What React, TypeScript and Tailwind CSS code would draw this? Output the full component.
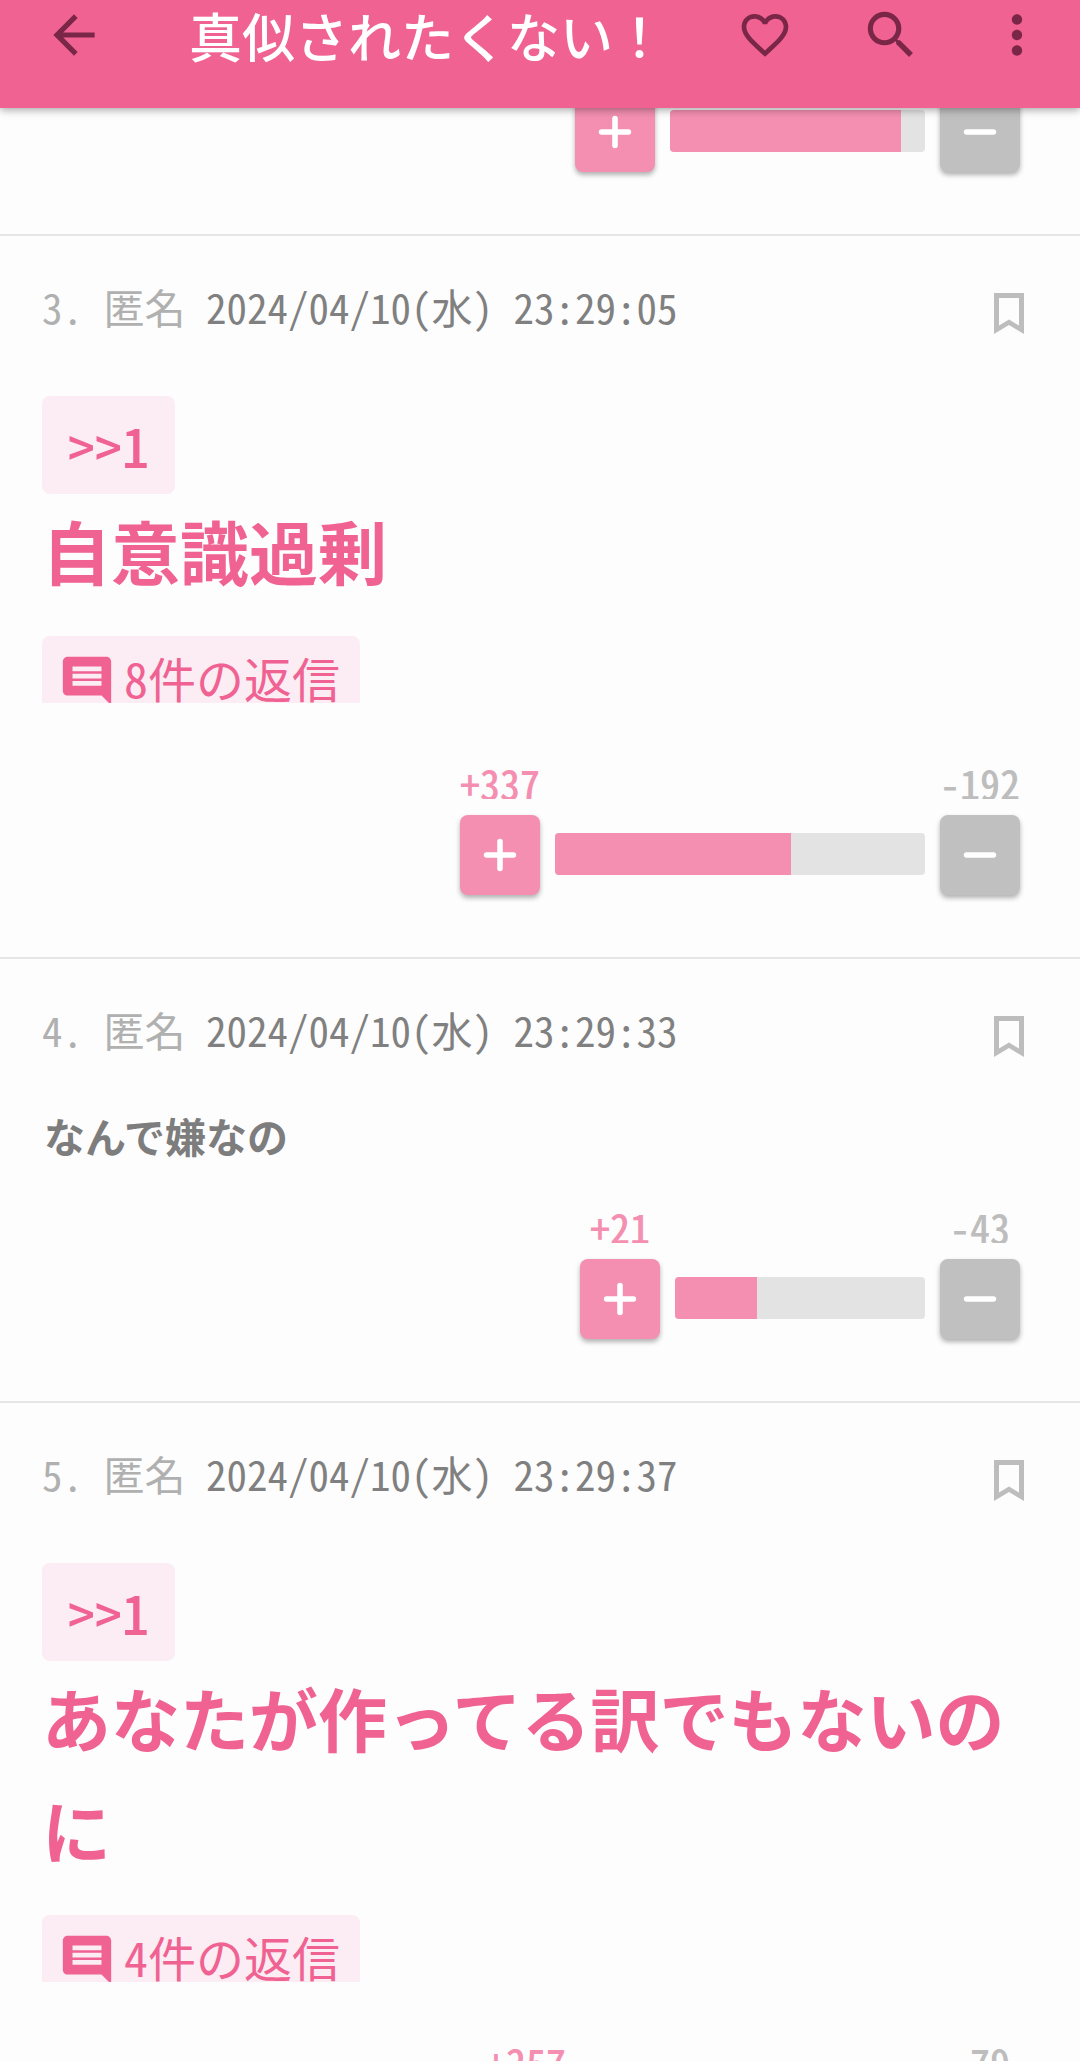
import React from "react";
import { Minus, Plus } from "lucide-react";
import {
  MdArrowBack,
  MdComment,
  MdFavoriteBorder,
  MdMoreVert,
  MdSearch,
} from "react-icons/md";

type Votes = { plus: number; minus: number; barWidth: number };

type Post = {
  id: number;
  time: string;
  body: string;
  quote?: string;
  popular?: boolean;
  replies?: number;
  votes: Votes;
};

const posts: Post[] = [
  {
    id: 3,
    time: "2024/04/10(水) 23:29:05",
    quote: ">>1",
    body: "自意識過剰",
    popular: true,
    replies: 8,
    votes: { plus: 337, minus: 192, barWidth: 370 },
  },
  {
    id: 4,
    time: "2024/04/10(水) 23:29:33",
    body: "なんで嫌なの",
    votes: { plus: 21, minus: 43, barWidth: 250 },
  },
  {
    id: 5,
    time: "2024/04/10(水) 23:29:37",
    quote: ">>1",
    body: "あなたが作ってる訳でもないのに",
    popular: true,
    replies: 4,
    votes: { plus: 257, minus: 79, barWidth: 344 },
  },
];

const BookmarkIcon = () => (
  <svg width="30" height="41" viewBox="0 0 30 41" fill="#bdbdbd">
    <path
      fillRule="evenodd"
      d="M0 0H30V41L15 32L0 41ZM5 5V32.5L15 26.5L25 32.5V5Z"
    />
  </svg>
);

const VoteBar = ({ plus, minus, barWidth }: Votes) => {
  const ratio = (plus / (plus + minus)) * 100;

  return (
    <div className="flex items-end justify-end gap-[15px] pr-[60px] shrink-0">
      <div className="w-20 flex flex-col items-center gap-4">
        <span className="h-[46px] overflow-hidden whitespace-nowrap text-[40px] leading-[60px] font-medium text-[#f48fb1]">
          +{plus}
        </span>
        <button
          aria-label="プラス"
          className="size-20 rounded-lg bg-[#f48fb1] text-white shadow-[0_3px_5px_rgba(0,0,0,0.3)] flex items-center justify-center"
        >
          <Plus size={46} strokeWidth={2.9} />
        </button>
      </div>
      <div
        className="h-[42px] mb-5 rounded-sm bg-[#e3e3e3] overflow-hidden"
        style={{ width: barWidth }}
      >
        <div className="h-full bg-[#f48fb1]" style={{ width: `${ratio}%` }} />
      </div>
      <div className="w-20 flex flex-col items-center gap-4">
        <span className="h-[46px] overflow-hidden whitespace-nowrap text-[40px] leading-[60px] font-medium text-[#bdbdbd]">
          -{minus}
        </span>
        <button
          aria-label="マイナス"
          className="size-20 rounded-lg bg-[#c0c0c0] text-white shadow-[0_3px_5px_rgba(0,0,0,0.3)] flex items-center justify-center"
        >
          <Minus size={46} strokeWidth={2.9} />
        </button>
      </div>
    </div>
  );
};

const PostItem = ({ post }: { post: Post }) => {
  return (
    <article className="pt-[46px] pb-[62px] border-b-2 border-[#e6e6e6]">
      <div className="flex items-start justify-between h-[52px] pl-[42px] pr-14 text-[41px] leading-[48px]">
        <div className="whitespace-pre text-[#b0b0b0]">
          {post.id}. 匿名 <time className="text-[#808080]">{post.time}</time>
        </div>
        <button aria-label="ブックマーク" className="self-end">
          <BookmarkIcon />
        </button>
      </div>

      {post.popular ? (
        <div className="mt-[62px] pl-[42px] pr-10 font-bold text-[#f06292]">
          <a
            href="#1"
            className="flex w-fit h-[98px] px-[26px] items-center rounded-lg bg-[#fbedf3] text-[54px] leading-none font-medium"
          >
            {post.quote}
          </a>
          <p className="text-[69px] leading-[112px]">{post.body}</p>
        </div>
      ) : (
        <p className="mt-[45px] mb-[29px] px-11 text-[41px] leading-[66px] font-bold text-[#7d7d7d]">
          {post.body}
        </p>
      )}

      {post.replies && (
        <div className="pt-[30px] pb-[50px] pl-[42px]">
          <button className="flex w-[318px] h-[67px] pl-4 pt-4 gap-2 items-start overflow-hidden rounded-t-lg bg-[#fbedf3] text-[#f06292] text-[48px] leading-[50px]">
            <MdComment size={58} className="shrink-0" />
            <span className="whitespace-nowrap">{post.replies}件の返信</span>
          </button>
        </div>
      )}

      <VoteBar {...post.votes} />
    </article>
  );
};

export default function App() {
  return (
    <div
      lang="ja"
      className="h-screen flex flex-col overflow-hidden bg-[#fdfdfd] font-['Noto_Sans_CJK_JP',sans-serif]"
    >
      <header className="relative z-10 shrink-0 flex items-center gap-16 pl-[43px] pr-8 pb-[38px] h-[108px] bg-[#f06292] text-[#7a2747] shadow-[0_2px_8px_rgba(0,0,0,0.35)]">
        <button aria-label="戻る">
          <MdArrowBack size={62} />
        </button>
        <h1 className="flex-1 pl-5 whitespace-nowrap text-[53px] leading-[70px] font-medium text-white">
          真似されたくない！
        </h1>
        <button
          aria-label="お気に入り"
          className="w-[62px] flex justify-center"
        >
          <MdFavoriteBorder size={56} />
        </button>
        <button aria-label="検索">
          <MdSearch size={62} />
        </button>
        <button aria-label="メニュー">
          <MdMoreVert size={62} />
        </button>
      </header>

      <main className="flex-1 min-h-0 overflow-hidden [font-feature-settings:'hwid']">
        {/* tail of the previous post, scrolled under the header */}
        <div className="h-32 pb-[62px] flex flex-col justify-end overflow-hidden border-b-2 border-[#e6e6e6]">
          <VoteBar plus={96} minus={10} barWidth={255} />
        </div>
        {posts.map((post) => (
          <PostItem key={post.id} post={post} />
        ))}
      </main>
    </div>
  );
}
